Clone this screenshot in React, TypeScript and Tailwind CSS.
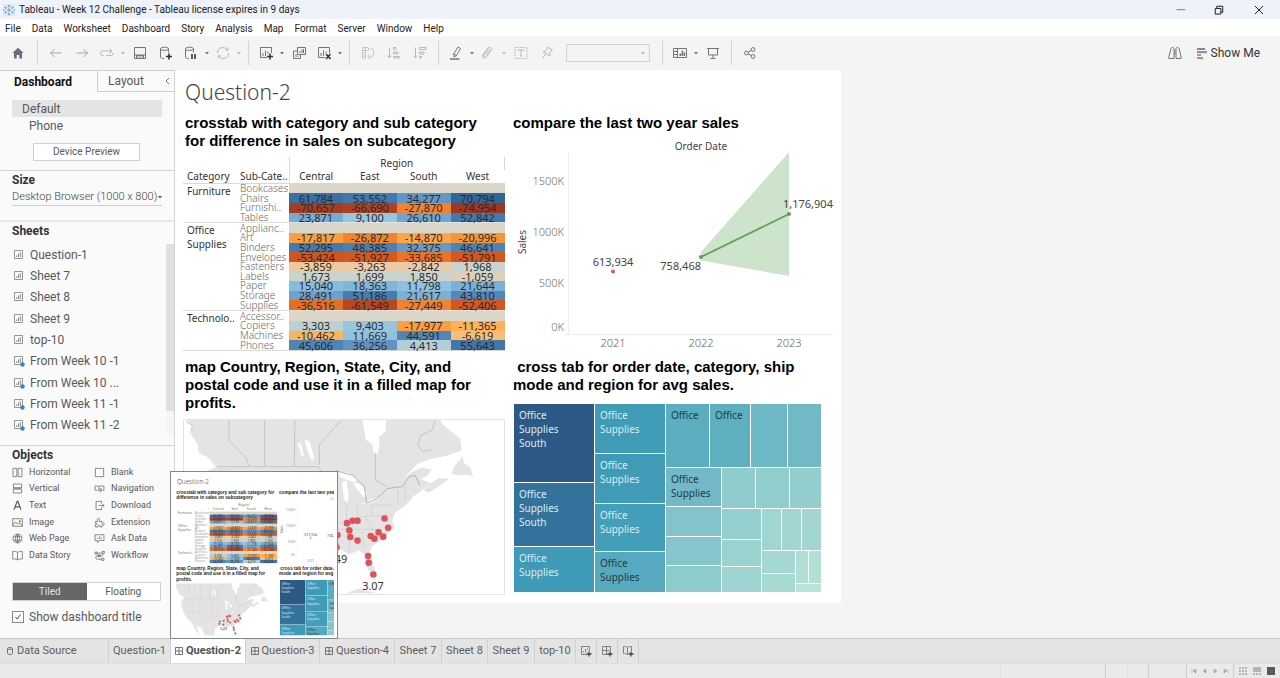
import React from 'react';

type Stop = [number, number, number, number];

const STOPS: Stop[] = [
  [-75000, 156, 56, 36],
  [-60000, 187, 72, 32],
  [-52000, 210, 87, 32],
  [-35000, 232, 112, 35],
  [-27000, 242, 132, 48],
  [-17000, 251, 160, 69],
  [-11000, 254, 178, 87],
  [-6600, 248, 190, 120],
  [-3500, 235, 202, 163],
  [0, 214, 211, 198],
  [1900, 201, 211, 207],
  [4400, 179, 206, 214],
  [9000, 152, 198, 222],
  [15000, 136, 187, 220],
  [22000, 121, 175, 214],
  [34000, 100, 150, 197],
  [45000, 79, 133, 183],
  [53000, 68, 121, 171],
  [71000, 51, 101, 154],
];

function shade(value: number | null): string {
  if (value === null) return 'rgb(218,214,202)';
  for (let i = 1; i < STOPS.length; i++) {
    const a = STOPS[i - 1];
    const b = STOPS[i];
    if (value <= b[0]) {
      const t = (value - a[0]) / (b[0] - a[0]);
      const c = [1, 2, 3].map((k) => Math.round(a[k] + (b[k] - a[k]) * t));
      return `rgb(${c[0]},${c[1]},${c[2]})`;
    }
  }
  return 'rgb(51,101,154)';
}

type Row = { name: string; values: (number | null)[] };
const NONE = [null, null, null, null];
const GROUPS: { category: string; rows: Row[] }[] = [
  {
    category: 'Furniture',
    rows: [
      { name: 'Bookcases', values: NONE },
      { name: 'Chairs', values: [61784, 53552, 34277, 70794] },
      { name: 'Furnishi..', values: [-70657, -66690, -27870, -74954] },
      { name: 'Tables', values: [23871, 9100, 26610, 52842] },
    ],
  },
  {
    category: 'Office Supplies',
    rows: [
      { name: 'Applianc..', values: NONE },
      { name: 'Art', values: [-17817, -26872, -14870, -20996] },
      { name: 'Binders', values: [52295, 48385, 32375, 46641] },
      { name: 'Envelopes', values: [-53424, -51927, -33685, -51791] },
      { name: 'Fasteners', values: [-3859, -3263, -2842, 1968] },
      { name: 'Labels', values: [1673, 1699, 1850, -1059] },
      { name: 'Paper', values: [15040, 18363, 11798, 21644] },
      { name: 'Storage', values: [28491, 51186, 21617, 43810] },
      { name: 'Supplies', values: [-36516, -61549, -27449, -52406] },
    ],
  },
  {
    category: 'Technolo..',
    rows: [
      { name: 'Accessor..', values: NONE },
      { name: 'Copiers', values: [3303, 9403, -17977, -11365] },
      { name: 'Machines', values: [-10462, 11669, 44591, -6619] },
      { name: 'Phones', values: [45606, 36256, 4413, 55643] },
    ],
  },
];
const ALL_ROWS = GROUPS.flatMap((g) => g.rows);
const fmt = (n: number | null) => (n === null ? '' : n.toLocaleString('en-US'));

/* ---------- icons ---------- */

function Icon({ children, size = 16, className = '' }: { children: React.ReactNode; size?: number; className?: string }) {
  return (
    <svg width={size} height={size} viewBox="0 0 16 16" fill="none" stroke="currentColor" strokeWidth="1" className={`shrink-0 ${className}`} aria-hidden="true">
      {children}
    </svg>
  );
}

const Caret = () => (
  <svg width="4" height="3" viewBox="0 0 4 3" className="fill-current" aria-hidden="true">
    <path d="M0 0h4L2 2.5z" />
  </svg>
);

function ToolButton({ label, children, dim = false, caret = false }: { label: string; children: React.ReactNode; dim?: boolean; caret?: boolean }) {
  return (
    <div className={dim ? 'flex text-[#b8b8b8]' : 'flex text-[#757575]'}>
      <button type="button" aria-label={label} className={caret ? 'flex h-6 w-6 items-center justify-center' : 'flex h-6 w-[26px] items-center justify-center'}>
        {children}
      </button>
      {caret && (
        <button type="button" aria-label={`${label} options`} className="flex h-6 w-2 items-center justify-center">
          <Caret />
        </button>
      )}
    </div>
  );
}

const Separator = () => <div className="mx-[5px] h-6 w-px bg-[#d4d4d4]" />;

const DbShape = () => <path d="M2.5 3.8c0-1 1.800-1.600 4-1.600s4 .6 4 1.600-1.800 1.600-4 1.600-4-.6-4-1.600zM2.500 3.800V12c0 1 1.600 1.600 3.600 1.600M10.500 3.800V7.500" />;

function Toolbar() {
  return (
    <div className="flex h-[34px] items-center bg-[#f4f4f4] pl-1">
      <button type="button" aria-label="Start page" className="flex h-6 w-7 items-center justify-center text-[#66707c]">
        <svg width="12" height="12" viewBox="0 0 12 12" className="fill-current" aria-hidden="true">
          <path d="M6 .8 11.600 6H10v5.500H7.300V8H4.700v3.500H2V6H.4z" />
        </svg>
      </button>
      <Separator />
      <ToolButton label="Undo" dim><Icon className="text-[#a4a4a4]"><path d="M13.500 8h-11M6.500 4 2.500 8l4 4" /></Icon></ToolButton>
      <ToolButton label="Redo" dim><Icon className="text-[#a4a4a4]"><path d="M2.500 8h11M9.500 4l4 4-4 4" /></Icon></ToolButton>
      <ToolButton label="Replay" dim caret><Icon><path d="M4.500 10.500H3.300a1.500 1.500 0 0 1-1.500-1.500V7.500A1.500 1.500 0 0 1 3.300 6H13M10.800 3.800 13 6l-2.200 2.200M13.800 8v1a1.500 1.500 0 0 1-1.500 1.500H7" /></Icon></ToolButton>
      <ToolButton label="Save"><Icon><path d="M2.500 2.500h11v11h-11zM4.500 13.500v-3h7v3M2.500 10h11" /><path d="M5 11h6v2H5z" className="fill-[#c4c4c4] stroke-none" /></Icon></ToolButton>
      <ToolButton label="New data source"><Icon><DbShape /><path d="M11 8.500v6M8 11.500h6" strokeWidth="1.600" className="stroke-[#333]" /></Icon></ToolButton>
      <ToolButton label="Pause auto updates" caret><Icon><DbShape /><path d="M9 9v5M12 9v5" strokeWidth="1.600" className="stroke-[#333]" /></Icon></ToolButton>
      <ToolButton label="Run update" dim caret><Icon><path d="M2.500 8A5.300 5.300 0 0 1 12.300 5M13.500 8A5.300 5.300 0 0 1 3.700 11M10.300 5.200h2.500V2.700M5.700 10.800H3.200v2.500" /></Icon></ToolButton>
      <Separator />
      <ToolButton label="New worksheet" caret><Icon><path d="M9 12.500H2.500v-10h11V8M5 11V8M7.500 11V5.500M10 9V6.500" /><path d="M12 8.500v6M9 11.500h6" strokeWidth="1.600" className="stroke-[#333]" /></Icon></ToolButton>
      <ToolButton label="Duplicate"><Icon><path d="M6.500 2.500h8v7h-8zM6 6H2.500v7.500h7v-3.500M5 12V9M7 12V10.500M9 8V6M11 8V4.500" /><path d="M12.500 4v4" /></Icon></ToolButton>
      <ToolButton label="Clear sheet" caret><Icon><path d="M9 12.500H2.500v-10h11V8M5 11V8M7.500 11V5.500M10 8V6.500" /><path d="m10 9 4.500 5M14.500 9 10 14" strokeWidth="1.600" className="stroke-[#333]" /></Icon></ToolButton>
      <Separator />
      <ToolButton label="Swap rows and columns" dim><Icon><path d="M2.500 2.500h6v3h-6zM2.500 5.500h3v8h-3zM2.500 8h3M2.500 11h3M5.500 2.500v3M10.500 4h1.500a2 2 0 0 1 1.500 2v3.500A2.500 2.500 0 0 1 11 12H8M9.500 10 7.700 12l1.800 2" strokeDasharray="1.500 .6" /></Icon></ToolButton>
      <ToolButton label="Sort ascending" dim><Icon><path d="M3.500 2.500v10M1.500 10.500l2 2.300 2-2.300M7.500 2.500h2.500v2H7.500zM7.500 7h4.500v2H7.500zM7.500 11.500h6v1.500h-6z" /></Icon></ToolButton>
      <ToolButton label="Sort descending" dim><Icon><path d="M3.500 2.500v10M1.500 10.500l2 2.300 2-2.300M7.500 2.500h6.500v2H7.500zM7.500 7h4.500v2H7.500zM7.500 11.500h2v1.500h-2z" /></Icon></ToolButton>
      <Separator />
      <ToolButton label="Highlight" caret><Icon><path d="m10 2 2.500 1.500-4 7L6 12l-.3-3zM5.700 9l2.600 1.500" /><path d="M2 14h9.500" strokeWidth="1.500" /></Icon></ToolButton>
      <ToolButton label="Group members" dim caret><Icon><path d="m4 8 4-5c1.500-1.700 4.500.2 3.200 2.300l-4.500 6.500c-1 1.400-3.600 0-2.700-1.700l4-5.500c.7-.9 2.100 0 1.500.9l-3.300 4.700M4 8l-1.300 2.200c-.9 2 1 3.600 2.800 3" /></Icon></ToolButton>
      <ToolButton label="Show mark labels" dim><Icon><path d="M2 2.500h12v11H2z" strokeDasharray="1.500 1" /><path d="M5 6V5h6v1M8 5v6M7 11h2" /></Icon></ToolButton>
      <ToolButton label="Fix axes" dim><Icon><path d="m9 2 4.500 3.200-1.200.4-1.800 2.900.3 2.500L4 6.500l2.500-.5L9 3.300zM6.500 9 3.500 13.500" /></Icon></ToolButton>
      <div className="ml-[6px] grid h-[18px] w-[84px] grid-rows-[100%] items-center border border-[#d2d2d2] text-[#b4b4b4]">
        <select aria-label="Fit" disabled className="col-start-1 row-start-1 h-full w-full appearance-none bg-transparent">
          <option></option>
        </select>
        <span className="col-start-1 row-start-1 mr-1 justify-self-end"><Caret /></span>
      </div>
      <div className="ml-[7px]"><Separator /></div>
      <ToolButton label="Show cards" caret><Icon><path d="M1.500 3.500h13v9h-13zM5.500 3.500v9M1.500 6.500h4M1.500 9.500h4" /><path d="M7.500 11V8.500h1.700V11zM9.700 11V5.500h1.500V11zM11.700 11V7.500h1.500V11z" className="fill-current stroke-none" /></Icon></ToolButton>
      <ToolButton label="Presentation mode"><Icon><path d="M2 3.500h12M3.500 3.500v6.500h9V3.500M8 10v3.500M5.500 13.500h5" /></Icon></ToolButton>
      <Separator />
      <ToolButton label="Share"><Icon><circle cx="4.500" cy="8" r="1.900" /><circle cx="11" cy="4.500" r="1.900" /><circle cx="11" cy="11.500" r="1.900" /><path d="m6.200 7.100 3.100-1.700M6.200 8.900l3.100 1.700" /></Icon></ToolButton>
      <div className="ml-auto flex items-center pr-5 text-[#757575]">
        <button type="button" aria-label="Data guide" className="mr-[14px]">
          <Icon size={16}><path d="M7 3.500C6.500 2 4.500 2 4 3.500L1.800 12v1.500H7zM9 3.500c.5-1.500 2.500-1.500 3 0l2.200 8.500v1.500H9zM7 6h2M7 8.500h2" /></Icon>
        </button>
        <button type="button" className="flex items-center gap-1 text-xs leading-4 text-[#333]">
          <svg width="10" height="11" viewBox="0 0 10 11" aria-hidden="true">
            <path d="M0 0h8v2H0z" fill="#9a7f93" />
            <path d="M0 3h10v2.200H0z" fill="#6f9bc8" />
            <path d="M0 6.200h4V8H0zM0 9h6v2H0z" fill="#e2787a" />
          </svg>
          Show Me
        </button>
      </div>
    </div>
  );
}

function TitleBar() {
  return (
    <header className="flex h-[19px] items-center bg-[#eef2fb] pl-[3px] text-[10px] text-[#222]">
      <svg width="12" height="12" viewBox="0 0 12 12" aria-hidden="true">
        <path d="M0 0h12v12H0z" fill="#dfe8f2" />
        <path d="M6 4v4M4 6h4M6 .8v2.400M4.800 2h2.400M6 8.800v2.400M4.800 10h2.400M2.500 2.700v2M1.500 3.700h2M9.500 2.700v2M8.500 3.700h2M2.500 7.300v2M1.500 8.300h2M9.500 7.300v2M8.500 8.300h2M.5 5.300v1.400M11.500 5.300v1.400" stroke="#5b93b5" strokeWidth=".8" />
      </svg>
      <h1 className="ml-1">Tableau - Week 12 Challenge - Tableau license expires in 9 days</h1>
      <div className="ml-auto flex">
        <button type="button" aria-label="Minimize" className="flex h-[19px] w-[38px] items-center justify-center">
          <Icon size={10}><path d="M1 7.500h14" className="stroke-[#777]" strokeWidth="1.500" /></Icon>
        </button>
        <button type="button" aria-label="Restore" className="flex h-[19px] w-[38px] items-center justify-center">
          <Icon size={10}><path d="M2 5.500h9v9H2zM4.500 5V2H14v9.500h-3" strokeWidth="1.600" /></Icon>
        </button>
        <button type="button" aria-label="Close" className="flex h-[19px] w-[42px] items-center justify-center">
          <Icon size={10}><path d="m1.500 1.500 13 13M14.500 1.500l-13 13" strokeWidth="1.600" /></Icon>
        </button>
      </div>
    </header>
  );
}

const MENUS = ['File', 'Data', 'Worksheet', 'Dashboard', 'Story', 'Analysis', 'Map', 'Format', 'Server', 'Window', 'Help'];

function MenuBar() {
  return (
    <nav className="flex h-[17px] items-center gap-[11px] bg-white pt-px pl-[5px] text-[10px] text-[#222]">
      {MENUS.map((m) => (
        <button type="button" key={m}>{m}</button>
      ))}
    </nav>
  );
}

/* ---------- sidebar ---------- */

function SheetIcon({ linked }: { linked: boolean }) {
  return (
    <svg width="12" height="12" viewBox="0 0 12 12" fill="none" stroke="#8a8a8a" aria-hidden="true">
      <path d="M1.500 1.500h8v8h-8z" strokeWidth=".9" />
      <path d="M3.700 8V6.300M5.500 8V4.500M7.300 8V3.300" />
      {linked && <circle cx="9.500" cy="9.500" r="2.200" fill="#3784b0" stroke="none" />}
    </svg>
  );
}

const SHEETS = ['Question-1', 'Sheet 7', 'Sheet 8', 'Sheet 9', 'top-10', 'From Week 10 -1', 'From Week 10 ...', 'From Week 11 -1', 'From Week 11 -2'];

const OBJECTS: { name: string; icon: React.ReactNode }[] = [
  { name: 'Horizontal', icon: <path d="M1.500 2h5.500v12H1.500zM9 2h5.500v12H9z" /> },
  { name: 'Blank', icon: <path d="M2 2h12v12H2z" /> },
  { name: 'Vertical', icon: <path d="M2 1.500h12V7H2zM2 9h12v5.500H2zM2 7.500h12" /> },
  { name: 'Navigation', icon: <path d="M5 10.500H1.500v-6h13v6H12M7 6.500l4.500 3-2 .4 1 2.300-1 .4-1-2.200-1.500 1.300z" /> },
  { name: 'Text', icon: <path d="M3 14 7.500 2h1L13 14M4.700 10h6.600" strokeWidth="1.800" /> },
  { name: 'Download', icon: <path d="M11 5V2H3v12h8v-3M7 8h7.500M12 5.500 14.500 8 12 10.500" /> },
  { name: 'Image', icon: <path d="M1 2.500h14v11H1zM1 12l4-5 3 3.500 2-2 5 4M10.500 5.500h2v1.500h-2z" /> },
  { name: 'Extension', icon: <path d="M2 6.500h3.500C4 3.500 5 2 6.500 2S9 3.500 8 6.500h3.500V9c3-1 3.500.5 3.500 1.300 0 .9-1 2-3.500 1.200v3H8.500c.5-2-.2-2.500-1.300-2.500s-2 .7-1.200 2.500H2V11c2 .5 2.500-.2 2.500-1S3.700 8.300 2 9z" /> },
  { name: 'Web Page', icon: <path d="M8 1.500a6.500 6.500 0 1 0 0 13 6.500 6.500 0 0 0 0-13zM8 1.500c-4 3.500-4 9.500 0 13M8 1.500c4 3.500 4 9.500 0 13M2.200 5.500h11.600M2.200 10.500h11.600M8 1.500v13" /> },
  { name: 'Ask Data', icon: <path d="M1.500 2.500h13v8.500H8l-3 3V11H1.500zM5.500 9V7.500M8 9V5M10.500 9V6.500" /> },
  { name: 'Data Story', icon: <path d="M8 3.500C6 2 4 2 1 2v11c3 0 5 0 7 1.500C10 13 12 13 15 13V2c-3 0-5 0-7 1.500v11" /> },
  { name: 'Workflow', icon: <path d="M1.500 3h3v3h-3zM4.500 4.500H11a2 2 0 0 1 0 4H5a2.500 2.500 0 0 0 0 5h6M11 12h3.500v3H11zM6 7h3v3H6zM12 2h3v3h-3z" /> },
];

function Sidebar() {
  return (
    <aside className="w-[175px] shrink-0 border-r border-[#d4d4d4] bg-[#fafafa] text-[#595959]">
      <div className="flex h-[22px] border-t border-[#cfcfcf] text-xs leading-5">
        <button type="button" className="w-[97px] pl-[14px] text-left font-bold text-[#111]">Dashboard</button>
        <button type="button" className="flex-1 border-b border-l border-[#cfcfcf] pl-[10px] text-left">Layout</button>
        <button type="button" aria-label="Collapse pane" className="flex w-[14px] items-center justify-center border-b border-[#cfcfcf]">
          <svg width="5" height="8" viewBox="0 0 5 8" fill="none" stroke="#777" aria-hidden="true"><path d="M4 1 1 4l3 3" /></svg>
        </button>
      </div>
      <section className="border-b border-[#d4d4d4] px-3 pt-2 pb-[9px] text-xs">
        <button type="button" className="block h-[17px] w-full max-w-[150px] bg-[#e4e4e4] pl-[10px] text-left leading-4">Default</button>
        <button type="button" className="block h-[18px] pl-[17px] text-left leading-4">Phone</button>
        <button type="button" className="mt-2 ml-[21px] block h-[18px] w-[107px] border border-[#cfcfcf] bg-white text-center text-[10px] leading-4">Device Preview</button>
      </section>
      <section className="border-b-2 border-[#e9e9e9] px-3 pb-[14px]">
        <h2 className="text-xs leading-[18px] font-bold text-[#333]">Size</h2>
        <div className="grid h-[17px] w-[150px] items-center border-b border-[#cfcfcf]">
          <select aria-label="Size" className="col-start-1 row-start-1 w-full appearance-none bg-transparent text-[11px] leading-4 font-light text-[#444]">
            <option>Desktop Browser (1000 x 800)</option>
          </select>
          <span className="pointer-events-none col-start-1 row-start-1 justify-self-end"><Caret /></span>
        </div>
      </section>
      <section className="border-b border-[#d4d4d4] pb-[9px]">
        <h2 className="pl-3 text-xs leading-[18px] font-bold text-[#333]">Sheets</h2>
        <div className="mt-1 flex h-[192px]">
          <ul className="grid flex-1 auto-rows-fr pl-[13px] text-xs">
            {SHEETS.map((s, i) => (
              <li key={s} className="flex items-center gap-[5px]">
                <SheetIcon linked={i > 4} />
                {s}
              </li>
            ))}
          </ul>
          <div className="w-2 bg-[#f5f5f5]"><div className="h-[167px] bg-[#e0e0e0]" /></div>
        </div>
      </section>
      <section className="px-3">
        <h2 className="text-xs leading-[18px] font-bold text-[#333]">Objects</h2>
        <ul className="grid h-[100px] auto-rows-fr grid-cols-[82px_1fr] text-[9px]">
          {OBJECTS.map((o) => (
            <li key={o.name} className="flex items-center gap-[6px] whitespace-nowrap">
              <Icon size={11}>{o.icon}</Icon>
              {o.name}
            </li>
          ))}
        </ul>
        <div className="mt-[18px] flex h-[19px] max-w-[149px] border border-[#d0d0d0] text-[10px]">
          <button type="button" className="flex-1 bg-[#666] text-[#e4e4e4]">Tiled</button>
          <button type="button" className="flex-1 bg-white">Floating</button>
        </div>
        <label className="mt-2 flex h-4 items-center gap-[5px] text-xs">
          <span className="grid h-3 w-3 shrink-0">
            <input type="checkbox" defaultChecked className="peer col-start-1 row-start-1 h-3 w-3 appearance-none border border-[#8a8a8a] bg-white" />
            <svg viewBox="0 0 12 12" width="12" height="12" fill="none" stroke="#444" className="pointer-events-none invisible col-start-1 row-start-1 peer-checked:visible" aria-hidden="true"><path d="m3.500 6 1.700 2L8.500 3.500" /></svg>
          </span>
          Show dashboard title
        </label>
      </section>
    </aside>
  );
}

/* ---------- dashboard views ---------- */

function Crosstab() {
  return (
    <table className="mt-[7px] h-[194px] w-full table-fixed border-collapse text-[11px] leading-[9px] text-[#333]">
      <colgroup>
        <col className="w-[56px]" />
        <col className="w-[50px]" />
        <col /><col /><col /><col />
      </colgroup>
      <thead className="text-[10px]">
        <tr className="h-[13px]">
          <td colSpan={2} />
          <th colSpan={4} className="border-x border-[#d8d8d8] p-0 font-normal">Region</th>
        </tr>
        <tr className="h-[13px] border-b border-[#d8d8d8]">
          <th className="p-0 pl-1 text-left font-normal">Category</th>
          <th className="p-0 pl-px text-left font-normal whitespace-nowrap">Sub-Cate..</th>
          {['Central', 'East', 'South', 'West'].map((r, i) => (
            <th key={r} className={i === 0 ? 'border-l border-[#d8d8d8] p-0 font-normal' : 'p-0 font-normal'}>{r}</th>
          ))}
        </tr>
      </thead>
      <tbody className="border-b border-[#d8d8d8]">
        {GROUPS.map((g) =>
          g.rows.map((r, i) => (
            <tr key={r.name} className={i === 0 ? 'border-t border-[#e2e2e2]' : ''}>
              {i === 0 && (
                <th rowSpan={g.rows.length} className="p-0 pl-1 text-left align-top text-[10px] leading-[14px] font-normal">
                  {g.category}
                </th>
              )}
              <th className="p-0 pl-px text-left text-[10px] font-light whitespace-nowrap text-[#666]">{r.name}</th>
              {r.values.map((v, k) => (
                <td key={k} className="p-0 text-center text-[#2a2a2a]" style={{ backgroundColor: shade(v) }}>{fmt(v)}</td>
              ))}
            </tr>
          )),
        )}
      </tbody>
    </table>
  );
}

function ForecastChart() {
  return (
    <svg width="321" height="215" viewBox="0 0 321 215" className="mt-[5px] text-[11px]" role="img" aria-label="Sales by order date">
      <text x="188" y="13" textAnchor="middle" className="fill-[#444] text-[10px]">Order Date</text>
      <path d="M55.500 15v182M52 197.500h268" className="stroke-[#ececec]" />
      <g textAnchor="end" className="fill-[#6f6f6f] font-light">
        <text x="51" y="48">1500K</text>
        <text x="51" y="99">1000K</text>
        <text x="51" y="150">500K</text>
        <text x="51" y="194">0K</text>
      </g>
      <text transform="translate(13 105) rotate(-90)" textAnchor="middle" className="fill-[#444] text-[10px]">Sales</text>
      <path d="M188 115 276 15v124l-88-15.500z" fill="#cde3cb" />
      <path d="M188 120 276 77" stroke="#5fa257" strokeWidth="1.800" />
      <circle cx="188" cy="120" r="2" fill="#5a9e52" />
      <circle cx="276" cy="77" r="2" fill="#5a9e52" />
      <circle cx="100" cy="134.500" r="2" fill="#dc5560" />
      <g className="fill-[#444]">
        <text x="100" y="129" textAnchor="middle">613,934</text>
        <text x="188" y="133" textAnchor="end">758,468</text>
        <text x="270" y="71">1,176,904</text>
      </g>
      <g textAnchor="middle" className="fill-[#5f5f5f] font-light">
        <text x="100" y="210">2021</text>
        <text x="188" y="210">2022</text>
        <text x="276" y="210">2023</text>
      </g>
    </svg>
  );
}

const DOTS = [
  [659, 491], [670, 519], [641, 533], [655, 546], [617, 544], [628, 552], [545, 505], [562, 498], [577, 498],
  [552, 527], [555, 547], [577, 558], [516, 541], [513, 578], [480, 548], [475, 570], [609, 605], [611, 625], [625, 661],
];

/* Map drawing in units of a third of a pixel */
function MapShapes() {
  return (
    <g>
      <path
        d="M58 192 76 212 72 238 90 262 96 292 122 305 148 334 122 345 118 400 140 460 160 500 215 560 245 620 272 655 300 720 262 590 300 600 345 690 380 720 420 720 434 620 470 590 528 586 552 600 580 588 600 600 606 640 622 668 634 664 624 626 612 596 622 574 652 556 676 530 690 518 682 498 692 472 716 456 734 440 746 424 774 404 800 384 770 372 790 360 802 342 772 336 742 350 716 370 760 324 800 310 850 300 893 284 888 248 860 226 836 206 828 192H664l-2 34 -20 18 2 30 -8 22 -10-4 -4-26 -20-14 -10-60z"
        fill="#e4e4e4"
      />
      <path d="m800 384 24-16 30 2 -20 16 -40 26 -18-6zM862 356l8-22 26-32 4 20 20 16 8 26 -20-6 -24 2zM540 718l40-14 40 10 20 4z" fill="#e4e4e4" />
      <path d="m396 262 10 2 8 36 -6 2zM416 250l16 8 14 50 -8 6 -14-30zM520 348l30 4 30 22 -16 6 -40-14zM530 380l14-4 6 40 -2 28 -12-10zM562 380l26 8 18 26 -8 14 -22-24zM590 446l30-14 24-2 -24 14z" fill="#fff" />
      <path d="M56 196 76 210 70 232M187 192v62l50 52 12 26M295 192v140M387 192l-2 140M527 192l-66 76v60M631 292v82l36 20M812 192l-8 30 -36 18 -8 26 14 22 28-6M152 334h308l6 14 46 2" fill="none" stroke="#b2b2b2" strokeWidth="2" />
      <path d="M512 346l50 14 36 34 6 50 30-12 34-32 44-6 22-30 18-4 14 30" fill="none" stroke="#b2b2b2" strokeWidth="3" />
      <path
        d="M620 450h60M544 448v54M576 448v44M620 450v34l60-4M700 400v50M722 380v60M520 504l40-14 60-8M520 524h130M520 590l-2-60M548 530l6 60M590 530l10 54M600 484l24 44M160 400h120M190 340v60M230 348v140M280 348v150M340 348v200M160 460h330M280 400h180M340 440h150M340 500h150M220 540h120M400 348v160M460 348v240"
        fill="none"
        stroke="#cdcdcd"
        strokeWidth="2"
      />
      <g className="fill-[#dc5459]">
        {DOTS.map(([x, y]) => (
          <circle key={`${x}-${y}`} cx={x} cy={y} r="10" />
        ))}
      </g>
      <g className="fill-[#333] text-[33px]">
        <text x="546" y="626" textAnchor="end">3.49</text>
        <text x="624" y="707" textAnchor="middle">3.07</text>
      </g>
    </g>
  );
}

type Tile = { x: number; y: number; w: number; h: number; fill: string; lines?: string[]; dark?: boolean };
const OS = ['Office', 'Supplies'];
const TILES: Tile[] = [
  { x: 0, y: 0, w: 80, h: 78, fill: '#2c5985', lines: [...OS, 'South'] },
  { x: 0, y: 79, w: 80, h: 63, fill: '#33739b', lines: [...OS, 'South'] },
  { x: 0, y: 143, w: 80, h: 45, fill: '#3f9ab8', lines: OS },
  { x: 81, y: 0, w: 70, h: 49, fill: '#409bb7', lines: OS },
  { x: 81, y: 50, w: 70, h: 49, fill: '#419bb7', lines: OS },
  { x: 81, y: 100, w: 70, h: 47, fill: '#439eb9', lines: OS },
  { x: 81, y: 148, w: 70, h: 40, fill: '#57a9c0', lines: OS, dark: true },
  { x: 152, y: 0, w: 43, h: 63, fill: '#5aaec0', lines: ['Office'], dark: true },
  { x: 196, y: 0, w: 40, h: 63, fill: '#5eb0c1', lines: ['Office'], dark: true },
  { x: 237, y: 0, w: 36, h: 63, fill: '#6fb8c5' },
  { x: 274, y: 0, w: 33, h: 63, fill: '#72b9c6' },
  { x: 152, y: 64, w: 55, h: 38, fill: '#73b9c7', lines: OS, dark: true },
  { x: 152, y: 103, w: 55, h: 29, fill: '#84c3cb' },
  { x: 152, y: 133, w: 55, h: 28, fill: '#88c4cc' },
  { x: 152, y: 162, w: 55, h: 26, fill: '#8ecbcd' },
  { x: 208, y: 64, w: 33, h: 40, fill: '#90cccd' },
  { x: 242, y: 64, w: 33, h: 40, fill: '#92cdce' },
  { x: 276, y: 64, w: 31, h: 40, fill: '#93cdce' },
  { x: 208, y: 105, w: 39, h: 30, fill: '#95cecf' },
  { x: 208, y: 136, w: 39, h: 26, fill: '#9ad2d0' },
  { x: 208, y: 163, w: 39, h: 25, fill: '#9dd3d1' },
  { x: 248, y: 105, w: 19, h: 41, fill: '#a0d5d1' },
  { x: 268, y: 105, w: 19, h: 41, fill: '#a2d6d2' },
  { x: 288, y: 105, w: 19, h: 41, fill: '#a3d6d2' },
  { x: 248, y: 147, w: 33, h: 22, fill: '#a5d8d3' },
  { x: 248, y: 170, w: 33, h: 18, fill: '#a8dad4' },
  { x: 282, y: 147, w: 12, h: 32, fill: '#b0dfd6' },
  { x: 295, y: 147, w: 12, h: 32, fill: '#b2e0d6' },
  { x: 282, y: 180, w: 25, h: 8, fill: '#b8e3d8' },
];

function TreemapShapes() {
  return (
    <g className="text-[10px]">
      {TILES.map((t) => (
        <g key={`${t.x}-${t.y}`}>
          <rect x={t.x} y={t.y} width={t.w} height={t.h} fill={t.fill} />
          {t.lines?.map((l, i) => (
            <text key={l} x={t.x + 5} y={t.y + 15 + i * 14} className={t.dark ? 'fill-[#1f3b46]' : 'fill-[#dcebf0]'}>{l}</text>
          ))}
        </g>
      ))}
    </g>
  );
}

function Heading({ children }: { children: React.ReactNode }) {
  return <h3 className="font-['Liberation_Sans',Arial,sans-serif] text-[15px] leading-[18px] font-bold text-black">{children}</h3>;
}

function Dashboard() {
  return (
    <div className="w-[666px] bg-white pr-[7px] pb-2 pl-2 font-['Noto_Sans',sans-serif]">
      <h2 className="flex h-11 items-center px-[2px] pt-[2px] text-[21px] font-light text-[#444]">Question-2</h2>
      <div className="grid grid-cols-[322px_321px] gap-x-2">
        <section className="h-[244px]">
          <div className="pr-5 pl-[2px]"><Heading>crosstab with category and sub category for difference in sales on subcategory</Heading></div>
          <Crosstab />
        </section>
        <section>
          <Heading>compare the last two year sales</Heading>
          <ForecastChart />
        </section>
        <section>
          <div className="pr-5 pl-[2px]"><Heading>map Country, Region, State, City, and postal code and use it in a filled map for profits.</Heading></div>
          <svg width="322" height="176" viewBox="53 192 966 528" className="mt-[7px] border border-[#e4e4e4]" role="img" aria-label="Profit map">
            <MapShapes />
          </svg>
        </section>
        <section>
          <Heading>&nbsp;cross tab for order date, category, ship mode and region for avg sales.</Heading>
          <svg width="308" height="188" viewBox="-1 0 308 188" className="mt-[10px]" role="img" aria-label="Average sales treemap">
            <TreemapShapes />
          </svg>
        </section>
      </div>
    </div>
  );
}

/* ---------- hover preview of a dashboard tab ---------- */

function Preview() {
  return (
    <div className="absolute bottom-full -left-px z-10 w-[168px] border border-[#7d8796] bg-white">
      <svg viewBox="0 0 498 498" className="block w-full font-['Noto_Sans',sans-serif] font-normal" aria-hidden="true">
        <clipPath id="page"><path d="M14 0h475v488H14z" /></clipPath>
        <g clipPath="url(#page)" transform="translate(0 2)">
          <text x="18" y="35" className="fill-[#444] text-[19px] font-light">Question-2</text>
          <g className="fill-[#222] font-['Liberation_Sans',Arial,sans-serif] text-[14px] font-bold">
            <text x="16" y="63">crosstab with category and sub category for</text>
            <text x="16" y="80">difference in sales on subcategory</text>
            <text x="324" y="63">compare the last two year sales</text>
            <text x="16" y="292">map Country, Region, State, City, and</text>
            <text x="16" y="308">postal code and use it in a filled map for</text>
            <text x="16" y="325">profits.</text>
            <text x="328" y="292">cross tab for order date, category, ship</text>
            <text x="324" y="308">mode and region for avg sales.</text>
          </g>
          <g className="fill-[#777] text-[10px]">
            <text x="218" y="101" textAnchor="middle">Region</text>
            {['Central', 'East', 'South', 'West'].map((r, i) => (
              <text key={r} x={141 + i * 50} y="113" textAnchor="middle">{r}</text>
            ))}
            <text x="20" y="124">Furniture</text>
            <text x="20" y="162">Office</text>
            <text x="20" y="175">Supplies</text>
            <text x="20" y="245">Technolo..</text>
          </g>
          {ALL_ROWS.map((r, i) => (
            <g key={r.name} className="fill-[#999] text-[9px]">
              <text x="71" y={124 + i * 9.06}>{r.name}</text>
              {r.values.map((v, k) => (
                <g key={k}>
                  <rect x={116 + k * 50.5} y={117 + i * 9.06} width="51" height="9.5" fill={shade(v)} />
                  <text x={141 + k * 50.5} y={125 + i * 9.06} textAnchor="middle" className="fill-[#333]">{fmt(v)}</text>
                </g>
              ))}
            </g>
          ))}
          <path d="M378.500 90v172" className="stroke-[#eee]" />
          <g className="fill-[#999] text-[10px]">
            <text x="344" y="115">1500K</text>
            <text x="344" y="163">1000K</text>
            <text x="350" y="210">500K</text>
            <text x="360" y="250">0K</text>
            <text x="419" y="267" textAnchor="middle">2021</text>
            <text x="419" y="190" textAnchor="middle" className="fill-[#555]">613,934</text>
            <text x="468" y="193" className="fill-[#555]">758,468</text>
            <text x="478" y="83">Order Date</text>
            <text transform="translate(337 170) rotate(-90)" textAnchor="middle" className="fill-[#555]">Sales</text>
          </g>
          <circle cx="419" cy="196" r="2" fill="#dc5560" />
          <g transform="translate(-7 271) scale(.32)"><MapShapes /></g>
          <g transform="translate(327 322) scale(.94)"><TreemapShapes /></g>
        </g>
      </svg>
    </div>
  );
}

/* ---------- bottom bars ---------- */

const GridIcon = () => (
  <svg width="8" height="8" viewBox="0 0 8 8" fill="none" stroke="#666" aria-hidden="true"><path d="M.5.5h7v7h-7zM4 .5v7M.5 4h7" strokeWidth=".9" /></svg>
);

const TABS: { name: string; dash: boolean; width: string }[] = [
  { name: 'Question-1', dash: false, width: 'w-[62px]' },
  { name: 'Question-2', dash: true, width: 'w-[75px]' },
  { name: 'Question-3', dash: true, width: 'w-[74px]' },
  { name: 'Question-4', dash: true, width: 'w-[75px]' },
  { name: 'Sheet 7', dash: false, width: 'w-[47px]' },
  { name: 'Sheet 8', dash: false, width: 'w-[46px]' },
  { name: 'Sheet 9', dash: false, width: 'w-[47px]' },
  { name: 'top-10', dash: false, width: 'w-[41px]' },
];

function TabBar() {
  return (
    <nav className="flex h-[25px] border-t border-[#c9c9c9] bg-[#e4e4e4] text-[11px] text-[#5c5c5c]">
      <button type="button" className="flex w-[109px] items-center gap-1 border-r border-[#cfcfcf] pl-[7px]">
        <svg width="6" height="8" viewBox="0 0 6 8" fill="none" stroke="#666" strokeWidth=".9" aria-hidden="true"><path d="M.5 1.500c0-1.300 5-1.300 5 0v5c0 1.300-5 1.300-5 0zM.5 1.500c0 1.200 5 1.200 5 0" /></svg>
        Data Source
      </button>
      {TABS.map((t) => {
        const active = t.name === 'Question-2';
        return (
          <div key={t.name} className={`relative flex border-r border-[#cfcfcf] ${t.width} ${active ? 'bg-white font-bold text-[#505050]' : ''}`}>
            <button type="button" className="flex flex-1 items-center justify-center gap-[3px] whitespace-nowrap">
              {t.dash && <GridIcon />}
              {t.name}
            </button>
            {active && <Preview />}
          </div>
        );
      })}
      {[
        { label: 'New worksheet', d: 'M7 9.500H1.500v-8h8V6M3.500 7.500V6M5.500 7.500V4M7.500 5V3.500' },
        { label: 'New dashboard', d: 'M7 9.500H1.500v-8h8V6M5.500 1.500v8M1.500 5.500h7' },
        { label: 'New story', d: 'M6 9.500C4 8.500 3 8.500 1.500 8.500v-7c2 0 3 0 4 1 1-1 2-1 4-1V6M5.500 2.500v7' },
      ].map((b) => (
        <button type="button" key={b.label} aria-label={b.label} className="flex w-[21px] items-center justify-center border-r border-[#cfcfcf]">
          <svg width="12" height="12" viewBox="0 0 12 12" fill="none" stroke="#777" aria-hidden="true">
            <path d={b.d} strokeWidth=".9" />
            <path d="M9 6.500v5M6.500 9h5" strokeWidth="1.300" stroke="#444" />
          </svg>
        </button>
      ))}
    </nav>
  );
}

function StatusBar() {
  return (
    <footer className="flex h-[15px] justify-end border-t border-[#dedede] bg-[#eaeaea] text-[#aaa]">
      <div className="w-[105px] border-l border-[#e0e0e0]" />
      <div className="w-[22px] border-l border-[#cfcfcf]" />
      <div className="w-[21px] border-l border-[#e0e0e0]" />
      <div className="w-[38px] border-l border-[#cfcfcf]" />
      <div className="flex w-[47px] items-center justify-around border-l border-[#cfcfcf] px-[2px]">
        {['M1 1v4M5 1 2 3l3 2z', 'M4 1 1 3l3 2z', 'M2 1l3 2-3 2z', 'M5 1v4M1 1l3 2-3 2z'].map((d, i) => (
          <button type="button" key={d} aria-label={['First', 'Previous', 'Next', 'Last'][i]}>
            <svg width="6" height="6" viewBox="0 0 6 6" fill="currentColor" stroke="currentColor" strokeWidth=".6" aria-hidden="true"><path d={d} /></svg>
          </button>
        ))}
      </div>
      <div className="flex w-[47px] items-center justify-around border-l border-[#cfcfcf] px-[2px]">
        {['M0 0h2v2H0zM3 0h2v2H3zM6 0h2v2H6zM0 3h2v2H0zM3 3h2v2H3zM6 3h2v2H6zM0 6h2v2H0zM3 6h2v2H3zM6 6h2v2H6z', 'M0 0h8v5H0zM0 6h2v2H0zM3 6h2v2H3zM6 6h2v2H6z', 'M0 0h8v8H0z'].map((d, i) => (
          <button type="button" key={d} aria-label={['Sheet sorter', 'Filmstrip', 'Tabs'][i]} className={i === 2 ? 'text-[#5a5a5a]' : 'text-[#b4b4b4]'}>
            <svg width="8" height="8" viewBox="0 0 8 8" fill="currentColor" aria-hidden="true"><path d={d} /></svg>
          </button>
        ))}
      </div>
    </footer>
  );
}

export default function App() {
  return (
    <div className="flex min-h-screen flex-col overflow-hidden bg-[#f4f4f4] font-['Roboto',sans-serif]">
      <TitleBar />
      <MenuBar />
      <Toolbar />
      <div className="flex flex-1 items-stretch">
        <Sidebar />
        <main className="min-w-0 flex-1">
          <Dashboard />
        </main>
      </div>
      <TabBar />
      <StatusBar />
    </div>
  );
}
